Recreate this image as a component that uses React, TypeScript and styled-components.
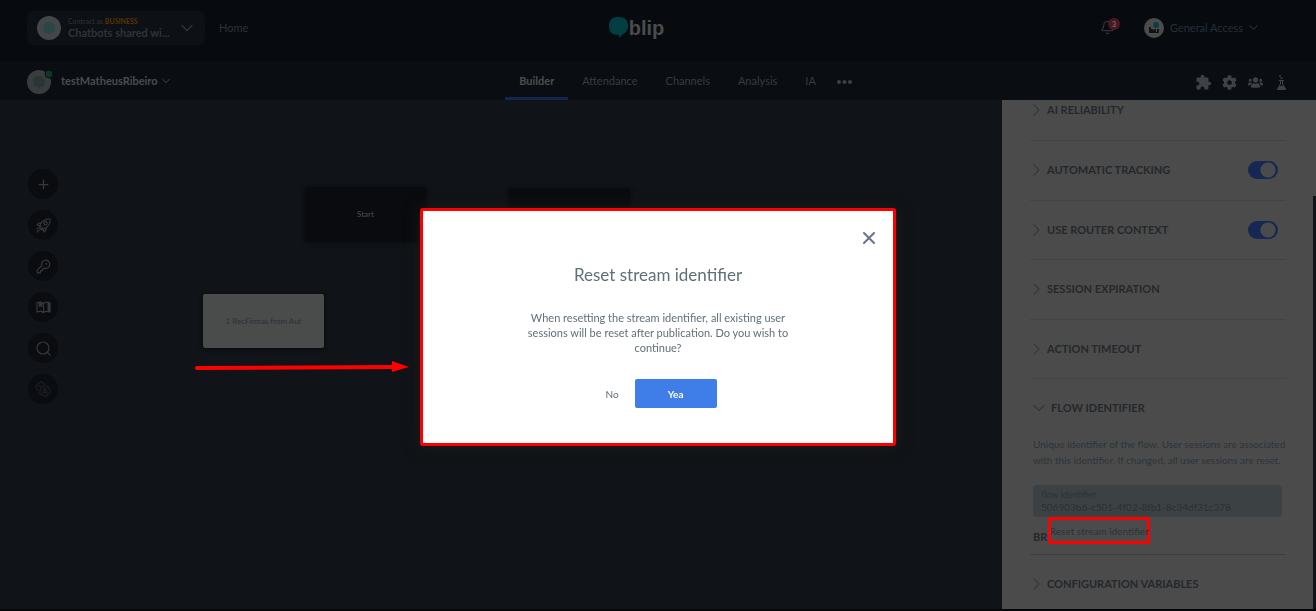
import React from "react";
import styled, { createGlobalStyle } from "styled-components";
import { Bell, KeyRound, Plus, X } from "lucide-react";
import { FaCog, FaUsers } from "react-icons/fa";
import { MdExtension } from "react-icons/md";

const Global = createGlobalStyle`
  * { box-sizing: border-box; }
  html, body, #root { height: 100%; }
  body { margin: 0; background: #101317; font-family: Lato, "Open Sans", sans-serif; overflow: hidden; }
  button { font: inherit; border: 0; padding: 0; background: none; color: inherit; cursor: pointer; }
  a { color: inherit; text-decoration: none; }
  h2, p { margin: 0; font-weight: inherit; }
  svg { flex: none; }
`;

const Page = styled.div`
  height: 100vh;
  display: flex;
  flex-direction: column;
  background: #101317;
  border-bottom: 2px solid #050608;
`;
const TopBar = styled.header`
  flex: none;
  height: 61px;
  background: #070a0f;
  padding: 0 58px 6px 27px;
  display: grid;
  grid-template-columns: 1fr auto 1fr;
  align-items: center;
`;
const Side = styled.div<{ $end?: boolean }>`
  display: flex;
  align-items: center;
  justify-content: ${(p) => (p.$end ? "flex-end" : "flex-start")};
`;
const Contract = styled.button`
  width: 178px;
  height: 34px;
  border-radius: 6px;
  background: #0d1014;
  display: flex;
  align-items: center;
  gap: 7px;
  padding: 0 12px 0 10px;
  text-align: left;
  color: #303438;
`;
const ContractText = styled.span`
  flex: 1;
  display: flex;
  flex-direction: column;
  white-space: nowrap;
`;
const Tiny = styled.span`
  font-size: 7px;
  line-height: 10px;
  b { color: #5a3406; font-weight: 700; }
`;
const Name = styled.span`
  font-size: 11px;
  line-height: 13px;
  font-weight: 700;
`;
const HomeLink = styled.a`
  margin-left: 14px;
  font-size: 11px;
  color: #2e3237;
`;
const Logo = styled.div`
  display: flex;
  align-items: center;
  margin-right: 12px;
  color: #4b4b4b;
  font-size: 20px;
  line-height: 24px;
  font-weight: 700;
  font-family: "Liberation Sans", sans-serif;
`;
const BellButton = styled.button`
  position: relative;
  width: 16px;
  height: 20px;
  color: #2e3338;
  display: flex;
  align-items: center;
`;
const Count = styled.span`
  position: absolute;
  right: -4px;
  top: 0;
  width: 12px;
  height: 12px;
  border-radius: 50%;
  background: #4b1822;
  color: #77666a;
  font-size: 7px;
  line-height: 12px;
  font-weight: 700;
`;
const Account = styled.button`
  margin-left: 28px;
  display: flex;
  align-items: center;
  gap: 6px;
  font-size: 11px;
  color: #252f38;
`;
const SubBar = styled.nav`
  flex: none;
  height: 39px;
  background: #0a0e13;
  padding: 0 26px 0 27px;
  display: grid;
  grid-template-columns: 1fr auto 1fr;
  align-items: stretch;
`;
const Bot = styled.button`
  display: flex;
  align-items: center;
  gap: 4px;
  font-size: 11px;
  font-weight: 700;
  color: #4a4c4e;
`;
const Tabs = styled.div`
  display: flex;
  align-items: stretch;
  padding-left: 40px;
`;
const Tab = styled.a<{ $active?: boolean }>`
  padding: 3px 14px 0;
  display: flex;
  align-items: center;
  font-size: 11px;
  font-weight: ${(p) => (p.$active ? 700 : 400)};
  color: ${(p) => (p.$active ? "#4b4d4f" : "#373b3f")};
  border-bottom: 3px solid ${(p) => (p.$active ? "#142650" : "transparent")};
`;
const MoreTab = styled.button`
  padding: 2px 0 0 7px;
  display: flex;
  align-items: center;
`;
const IconRow = styled.div`
  display: flex;
  align-items: center;
  justify-content: flex-end;
  gap: 9px;
  padding-top: 4px;
  color: #3d4245;
`;
const IconButton = styled.button`
  width: 17px;
  display: flex;
  justify-content: center;
`;
const Main = styled.main`
  flex: 1;
  min-height: 0;
  display: flex;
`;
const Canvas = styled.section`
  flex: 1;
  position: relative;
  overflow: hidden;
  padding: 69px 28px;
`;
const Tools = styled.div`
  display: flex;
  flex-direction: column;
  gap: 11px;
  width: 30px;
`;
const Tool = styled.button<{ $dim?: boolean }>`
  width: 30px;
  height: 30px;
  border-radius: 50%;
  background: #0a0c10;
  color: ${(p) => (p.$dim ? "#181c23" : "#36383c")};
  display: flex;
  align-items: center;
  justify-content: center;
`;
const Node = styled.div<{ $x: number; $y: number; $light?: boolean }>`
  position: absolute;
  left: ${(p) => p.$x}px;
  top: ${(p) => p.$y}px;
  width: 121px;
  height: 54px;
  border-radius: 2px;
  display: flex;
  align-items: center;
  justify-content: center;
  font-size: 8px;
  background: ${(p) => (p.$light ? "#4a4b4b" : "#0a0b0e")};
  color: ${(p) => (p.$light ? "#2b3138" : "#4a4b4c")};
  box-shadow: 0 1px 4px #08090c;
`;
const Arrow = styled.svg`
  position: absolute;
  left: 194px;
  top: 260px;
`;
const Panel = styled.aside`
  width: 314px;
  flex: none;
  background: #4b4b4b;
  position: relative;
  overflow: hidden;
  padding: 0 30px 0 28px;
  color: #24282b;
`;
const Track = styled.div`
  position: absolute;
  right: 0;
  top: 96px;
  bottom: 0;
  width: 3px;
  background: #101215;
`;
const Item = styled.section<{ $first?: boolean; $last?: boolean }>`
  height: ${(p) => (p.$first ? 41 : 60)}px;
  border-bottom: ${(p) => (p.$last ? 0 : 1)}px solid #414545;
  padding: ${(p) => (p.$first ? 0 : 19)}px 8px 0 3px;
  display: flex;
  align-items: flex-start;
  justify-content: space-between;
  &:nth-of-type(odd) { height: ${(p) => (p.$first ? 41 : 59)}px; }
`;
const Heading = styled.button`
  display: flex;
  align-items: center;
  gap: 6px;
  font-size: 11px;
  line-height: 20px;
  font-weight: 700;
  svg { color: #343a3b; }
`;
const Switch = styled.input`
  appearance: none;
  margin: 1px 0 0;
  width: 30px;
  height: 18px;
  border-radius: 9px;
  background: radial-gradient(circle at 20px 9px, #4b4b4b 7px, #142853 8px);
`;
const FlowItem = styled.section`
  border-bottom: 1px solid #3b3f40;
  padding: 19px 4px 0 3px;
  height: 176px;
`;
const Note = styled.p`
  margin: 18px 0 17px;
  font-size: 10px;
  line-height: 16px;
  color: #2c343a;
  white-space: nowrap;
`;
const Field = styled.label`
  display: flex;
  flex-direction: column;
  height: 32px;
  padding: 4px 8px;
  border-radius: 4px;
  background: #3c4243;
  font-size: 9px;
  line-height: 11px;
  color: #2c3233;
  input {
    border: 0;
    padding: 0;
    background: none;
    width: 100%;
    font-family: inherit;
    font-size: 10px;
    line-height: 14px;
    color: #2c2f30;
  }
`;
const ResetRow = styled.div`
  display: flex;
  gap: 1px;
  font-size: 11px;
  font-weight: 700;
  line-height: 39px;
`;
const ResetButton = styled.button`
  width: 102px;
  height: 27px;
  border: 3px solid #fe0000;
  border-radius: 2px;
  display: flex;
  align-items: center;
  justify-content: center;
  font-size: 10px;
  line-height: 20px;
  font-weight: 400;
  white-space: nowrap;
  color: #2b3338;
`;
const Overlay = styled.div`
  position: fixed;
  inset: 0;
  padding-top: 43px;
  display: flex;
  align-items: center;
  justify-content: center;
`;
const Dialog = styled.div`
  position: relative;
  width: 476px;
  height: 238px;
  border: 3px solid #fe0000;
  border-radius: 3px;
  background: #fff;
  box-shadow: 0 1px 16px #1b1a1a;
  color: #607078;
  display: flex;
  flex-direction: column;
  align-items: center;
  text-align: center;
`;
const Close = styled.button`
  position: absolute;
  right: 14px;
  top: 17px;
  width: 20px;
  height: 20px;
  color: #6b7690;
`;
const Title = styled.h2`
  margin-top: 52px;
  font-size: 17px;
  line-height: 24px;
`;
const Message = styled.p`
  width: 280px;
  margin-top: 23px;
  font-size: 11px;
  line-height: 15px;
`;
const Actions = styled.div`
  display: flex;
  align-items: center;
  gap: 16px;
  margin: 24px 0 0 6px;
  font-size: 10px;
`;
const Yes = styled.button`
  width: 82px;
  height: 29px;
  border-radius: 2px;
  background: #3f7de8;
  color: #fff;
  font-weight: 700;
`;

const stroke = { fill: "none", stroke: "currentColor", strokeLinecap: "round", strokeLinejoin: "round" } as const;

const ChevronRight = () => (
  <svg width="8" height="14" viewBox="0 0 8 14" {...stroke} strokeWidth="1.2"><path d="M1 2l5 5-5 5" /></svg>
);
const ChevronDown = ({ width = 12 }: { width?: number }) => (
  <svg width={width} height={width} viewBox="0 0 12 12" {...stroke} strokeWidth="1.4"><path d="M1 3.5l5 5 5-5" /></svg>
);
const Avatar = () => (
  <svg width="24" height="24" viewBox="0 0 24 24">
    <circle cx="12" cy="12" r="12" fill="#434748" />
    <path d="M12 6c4 0 6 2 6 6 0 3-2 5-4 5l-2 2-1-2c-3 0-5-2-5-5 0-4 2-6 6-6Z" fill="#2b4646" />
  </svg>
);
const RocketIcon = () => (
  <svg width="15" height="15" viewBox="0 0 15 15" {...stroke} strokeWidth="1.1">
    <path d="M14 1c-4-.4-7 .8-9.500 5L4 8l3 3 2-.6C13 8 14.400 5 14 1Z" />
    <circle cx="9.500" cy="5.300" r="1.700" />
    <path d="M5 5H3L1 7l3 1M10 10v2l-2 2-1-3M4 8l-1 1.500L5.500 12 7 11M1 14l2-2M1 11l.6-.6" />
  </svg>
);
const BookIcon = () => (
  <svg width="15" height="13" viewBox="0 0 15 13" {...stroke} strokeWidth="1.2">
    <path d="M7.500 2.500C6 1 3 1 1 2v9c2-.8 5-.8 6.500.5C9 10.200 12 10.200 14 11V2c-2-1-5-1-6.500.5v9" />
    <path d="M3 2v4l1.500-1L6 6V2Z" fill="currentColor" strokeWidth=".5" />
    <path d="M12 2h2v9l-2-1Z" fill="currentColor" strokeWidth=".5" />
  </svg>
);
const SearchIcon = () => (
  <svg width="15" height="15" viewBox="0 0 15 15" {...stroke} strokeWidth="1.2"><circle cx="7" cy="7" r="6" /><path d="M11.300 11.300L14 14" /></svg>
);
const VariantsIcon = () => (
  <svg width="16" height="16" viewBox="0 0 16 16" {...stroke} strokeWidth="1.3">
    <path d="M5 10L2 9 1 5l2-3 4-1 3 3" />
    <circle cx="10" cy="10" r="5" />
    <circle cx="10" cy="9" r="1.500" />
    <path d="M5.500 5.500L3 4M7.500 12.500c1-1.500 4-1.500 5 0M4 12l1 1" />
  </svg>
);
const FlaskIcon = () => (
  <svg width="11" height="15" viewBox="0 0 11 15" fill="currentColor">
    <path d="M3 5h5v1H7v3l3 5v1H1v-1l3-5V6H3ZM5 6v3L4 11h3L6 9V6Z" fillRule="evenodd" />
    <circle cx="5.500" cy="3.300" r="1" /><circle cx="4" cy="1" r=".9" />
  </svg>
);

type AccordionProps = { title: string; toggle?: boolean; first?: boolean; last?: boolean };
const Accordion = ({ title, toggle, first, last }: AccordionProps) => (
  <Item $first={first} $last={last}>
    <Heading><ChevronRight />{title}</Heading>
    {toggle && <Switch type="checkbox" defaultChecked aria-label={title} />}
  </Item>
);

export default function App() {
  return (
    <Page>
      <Global />
      <TopBar>
        <Side>
          <Contract>
            <Avatar />
            <ContractText>
              <Tiny>Contract as <b>BUSINESS</b></Tiny>
              <Name>Chatbots shared wi...</Name>
            </ContractText>
            <ChevronDown />
          </Contract>
          <HomeLink href="#">Home</HomeLink>
        </Side>
        <Logo>
          <svg width="20" height="21" viewBox="0 0 20 21"><path d="M9 0c7 0 10 3 10 9 0 4-2 7-5 8l-4 4v-3c-7 0-10-3-10-9 0-6 3-9 9-9Z" fill="#033f42" /></svg>
          blip
        </Logo>
        <Side $end>
          <BellButton aria-label="Notifications"><Bell size={15} strokeWidth={2} /><Count>3</Count></BellButton>
          <Account>
            <svg width="20" height="20" viewBox="0 0 20 20"><circle cx="10" cy="10" r="10" fill="#4b4b4b" /><path d="M5 9h2v2h2v1h1v-1h2v3h1v-3h2v4H5Z" fill="#101214" /><circle cx="12" cy="7" r="3" fill="#064046" /></svg>
            General Access
            <ChevronDown width={9} />
          </Account>
        </Side>
      </TopBar>
      <SubBar>
        <Side>
          <Bot>
            <svg width="30" height="28" viewBox="0 0 30 28"><circle cx="12" cy="15" r="12" fill="#393d3e" /><path d="M12 9c4 0 6 2 6 6 0 3-2 5-4 5l-2 2-1-2c-3 0-5-2-5-5 0-4 2-6 6-6Z" fill="#2d3435" /><circle cx="22" cy="7" r="4" fill="#0a3a20" stroke="#0a0e13" /></svg>
            testMatheusRibeiro
            <ChevronDown width={8} />
          </Bot>
        </Side>
        <Tabs>
          <Tab href="#" $active>Builder</Tab>
          <Tab href="#">Attendance</Tab>
          <Tab href="#">Channels</Tab>
          <Tab href="#">Analysis</Tab>
          <Tab href="#">IA</Tab>
          <MoreTab aria-label="More"><svg width="15" height="5" viewBox="0 0 15 5" fill="#3d4043"><circle cx="2" cy="3" r="2" /><circle cx="7.500" cy="3" r="2" /><circle cx="13" cy="3" r="2" /></svg></MoreTab>
        </Tabs>
        <IconRow>
          <IconButton aria-label="Extensions"><MdExtension size={17} /></IconButton>
          <IconButton aria-label="Settings"><FaCog size={15} /></IconButton>
          <IconButton aria-label="Team"><FaUsers size={15} /></IconButton>
          <IconButton aria-label="Beta features"><FlaskIcon /></IconButton>
        </IconRow>
      </SubBar>
      <Main>
        <Canvas>
          <Tools>
            <Tool aria-label="Add block"><Plus size={15} strokeWidth={2} /></Tool>
            <Tool aria-label="Publish"><RocketIcon /></Tool>
            <Tool aria-label="Keys"><KeyRound size={15} strokeWidth={2} /></Tool>
            <Tool aria-label="Library"><BookIcon /></Tool>
            <Tool aria-label="Search"><SearchIcon /></Tool>
            <Tool aria-label="Variants" $dim><VariantsIcon /></Tool>
          </Tools>
          <Node $x={305} $y={87}>Start</Node>
          <Node $x={509} $y={88} />
          <Node $x={203} $y={194} $light>1 RecFirmas from Aut</Node>
          <Arrow width="216" height="14" viewBox="0 0 216 14"><path d="M3 8L200 7" stroke="#fe0000" strokeWidth="4" strokeLinecap="round" /><path d="M198 1l17 6-17 5Z" fill="#fe0000" /></Arrow>
        </Canvas>
        <Panel>
          <Track />
          <Accordion title="AI RELIABILITY" first />
          <Accordion title="AUTOMATIC TRACKING" toggle />
          <Accordion title="USE ROUTER CONTEXT" toggle />
          <Accordion title="SESSION EXPIRATION" />
          <Accordion title="ACTION TIMEOUT" />
          <FlowItem>
            <Heading><ChevronDown />FLOW IDENTIFIER</Heading>
            <Note>Unique identifier of the flow. User sessions are associated<br />with this identifier. If changed, all user sessions are reset.</Note>
            <Field>flow identifier<input defaultValue="506903b6-c501-4f02-8fb1-8c34df31c378" /></Field>
            <ResetRow>BR<ResetButton>Reset stream identifier</ResetButton></ResetRow>
          </FlowItem>
          <Accordion title="CONFIGURATION VARIABLES" last />
        </Panel>
      </Main>
      <Overlay>
        <Dialog role="dialog" aria-labelledby="reset-title">
          <Close aria-label="Close"><X size={20} strokeWidth={2.5} /></Close>
          <Title id="reset-title">Reset stream identifier</Title>
          <Message>When resetting the stream identifier, all existing user sessions will be reset after publication. Do you wish to continue?</Message>
          <Actions><button>No</button><Yes>Yea</Yes></Actions>
        </Dialog>
      </Overlay>
    </Page>
  );
}
